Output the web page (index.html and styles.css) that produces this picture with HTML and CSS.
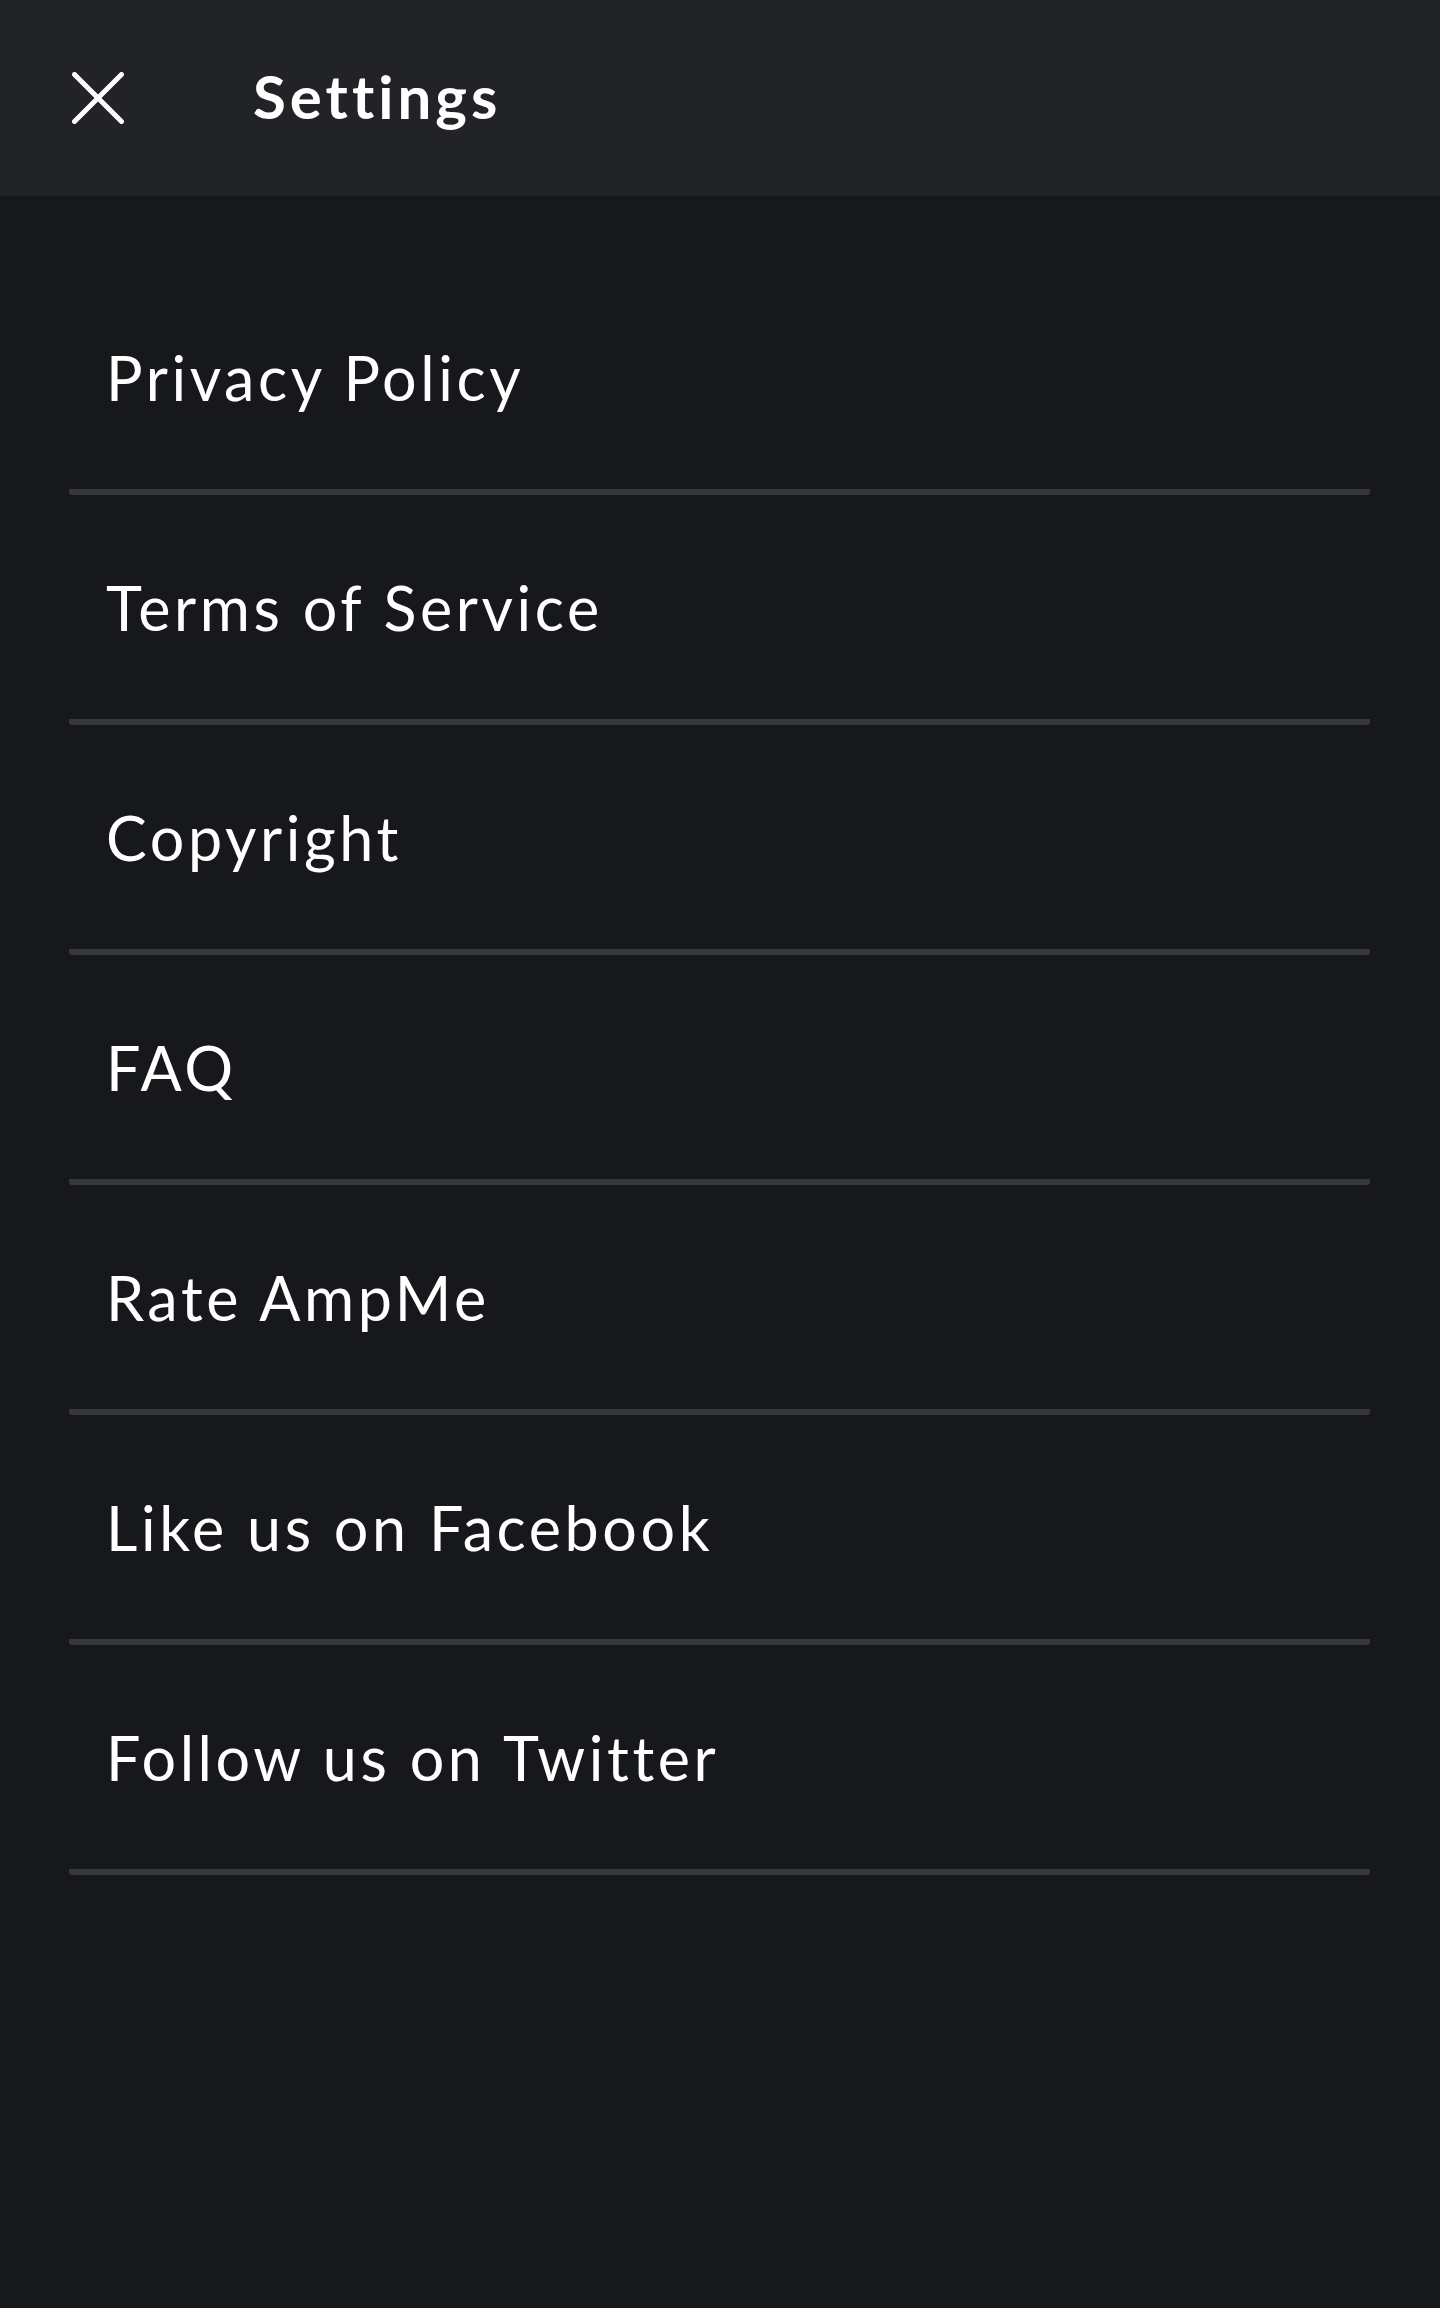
FILE: index.html
```html
<!DOCTYPE html>
<html lang="en">
<head>
<meta charset="utf-8">
<title>Settings</title>
<link rel="stylesheet" href="styles.css">
</head>
<body>
<header class="topbar">
  <button class="close" aria-label="Close">
    <svg viewBox="0 0 52 52" width="52" height="52" aria-hidden="true">
      <path d="M2.5 2.5 L49.5 49.5 M49.5 2.5 L2.5 49.5" stroke="#ffffff" stroke-width="5" stroke-linecap="round" fill="none"/>
    </svg>
  </button>
  <h1 class="title">Settings</h1>
</header>
<ul class="menu">
  <li class="item">Privacy Policy</li>
  <li class="item">Terms of Service</li>
  <li class="item">Copyright</li>
  <li class="item">FAQ</li>
  <li class="item">Rate AmpMe</li>
  <li class="item">Like us on Facebook</li>
  <li class="item">Follow us on Twitter</li>
</ul>
</body>
</html>
```
FILE: styles.css
```css
html, body {
  margin: 0;
  padding: 0;
}
body {
  background: #17181b;
  color: #ffffff;
  font-family: Lato, "Open Sans", "Liberation Sans", sans-serif;
  font-variant-ligatures: none;
  min-height: 2308px;
}
.topbar {
  height: 196px;
  background: #222326;
  display: flex;
  align-items: center;
}
.close {
  background: none;
  border: 0;
  padding: 0;
  margin-left: 72px;
  width: 52px;
  height: 52px;
  display: flex;
}
.title {
  margin: 0 0 4px 129px;
  font-size: 60px;
  font-weight: 700;
  letter-spacing: 4px;
}
.menu {
  list-style: none;
  margin: 69px 0 0 0;
  padding: 0;
}
.item {
  height: 224px;
  margin: 0 70px 0 69px;
  padding-left: 37px;
  display: flex;
  align-items: center;
  font-size: 61px;
  font-weight: 400;
  letter-spacing: 3.6px;
  border-bottom: 6px solid #37383b;
  border-radius: 0 0 3px 3px;
}
```
